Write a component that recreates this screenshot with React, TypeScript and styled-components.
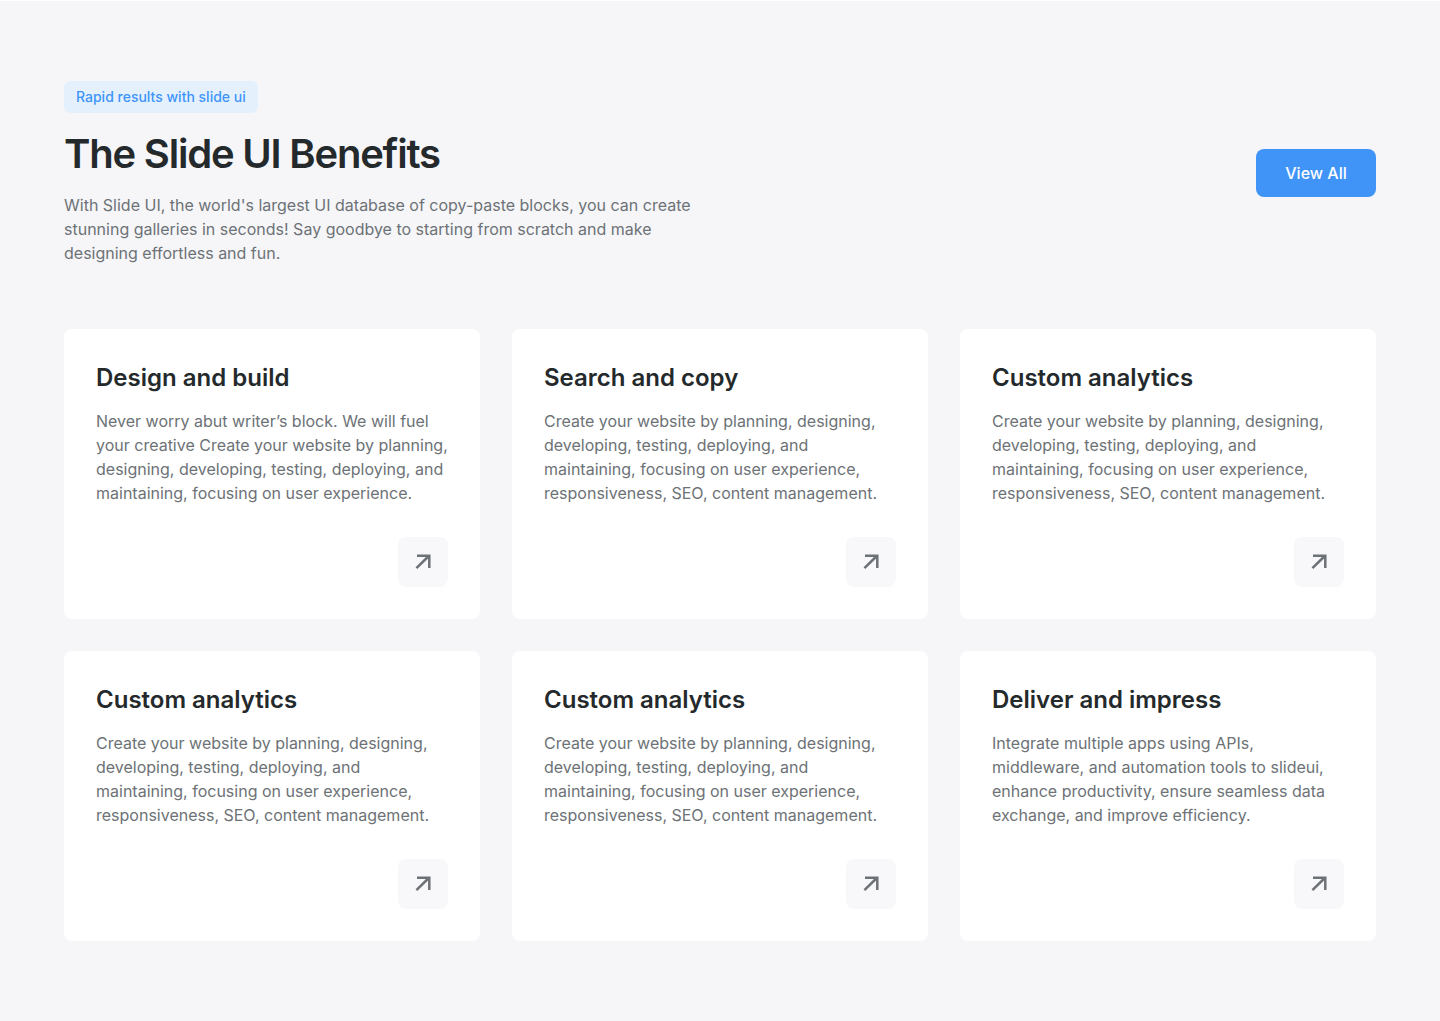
import React from "react";
import styled, { createGlobalStyle } from "styled-components";

const Global = createGlobalStyle`
  *, *::before, *::after { box-sizing: border-box; }
  body { margin: 0; background: #f6f6f9; font-family: Inter, "Liberation Sans", sans-serif; }
`;

const Section = styled.main`
  padding: 80px 64px;
  border-top: 1px solid #fdfdfe;
  color: #6d7276;
  font-size: 16px;
  line-height: 24px;
`;

const Header = styled.header`
  display: flex;
  align-items: center;
  justify-content: space-between;
  gap: 32px;
  margin-bottom: 64px;
`;

const Intro = styled.div`
  display: flex;
  flex-direction: column;
  align-items: flex-start;
  max-width: 640px;
`;

const Tag = styled.span`
  padding: 6px 12px;
  border-radius: 6px;
  background: #e4f1fd;
  color: #3f95f9;
  font-size: 14px;
  line-height: 20px;
  font-weight: 500;
`;

const Title = styled.h1`
  margin: 16px 0 14px;
  color: #24292c;
  font-size: 40px;
  line-height: 50px;
  font-weight: 600;
  letter-spacing: -0.03em;
`;

const Text = styled.p`
  margin: 0;
`;

const ViewAll = styled.button`
  flex: none;
  min-width: 120px;
  padding: 12px 24px;
  border: 0;
  border-radius: 8px;
  background: #4094f7;
  color: #fff;
  font: 500 16px/24px Inter, "Liberation Sans", sans-serif;
  cursor: pointer;
`;

const Grid = styled.div`
  display: grid;
  grid-template-columns: repeat(3, minmax(0, 1fr));
  gap: 32px;
`;

const Card = styled.article`
  display: flex;
  flex-direction: column;
  padding: 32px;
  border-radius: 8px;
  background: #fff;
`;

const CardTitle = styled.h2`
  margin: 0 0 14px;
  color: #24292c;
  font-size: 24px;
  line-height: 34px;
  font-weight: 600;
`;

const ArrowLink = styled.a`
  display: flex;
  align-items: center;
  justify-content: center;
  align-self: flex-end;
  width: 50px;
  height: 50px;
  margin-top: 32px;
  border-radius: 8px;
  background: #f8f8fa;
  color: #6d7276;
`;

const benefits = [
  { title: "Design and build", text: "Never worry abut writer’s block. We will fuel your creative Create your website by planning, designing, developing, testing, deploying, and maintaining, focusing on user experience." },
  { title: "Search and copy", text: "Create your website by planning, designing, developing, testing, deploying, and maintaining, focusing on user experience, responsiveness, SEO, content management." },
  { title: "Custom analytics", text: "Create your website by planning, designing, developing, testing, deploying, and maintaining, focusing on user experience, responsiveness, SEO, content management." },
  { title: "Custom analytics", text: "Create your website by planning, designing, developing, testing, deploying, and maintaining, focusing on user experience, responsiveness, SEO, content management." },
  { title: "Custom analytics", text: "Create your website by planning, designing, developing, testing, deploying, and maintaining, focusing on user experience, responsiveness, SEO, content management." },
  { title: "Deliver and impress", text: "Integrate multiple apps using APIs, middleware, and automation tools to slideui, enhance productivity, ensure seamless data exchange, and improve efficiency." },
];

const Arrow = () => (
  <svg width="24" height="24" viewBox="0 0 24 24" fill="none" stroke="currentColor" strokeWidth="2.5" aria-hidden="true">
    <path d="M5.4 18.2 17.8 6M6 5.7h12.3V18" />
  </svg>
);

export default function App() {
  return (
    <>
      <Global />
      <Section>
        <Header>
          <Intro>
            <Tag>Rapid results with slide ui</Tag>
            <Title>The Slide UI Benefits</Title>
            <Text>
              With Slide UI, the world's largest UI database of copy-paste blocks, you can create
              stunning galleries in seconds! Say goodbye to starting from scratch and make designing
              effortless and fun.
            </Text>
          </Intro>
          <ViewAll type="button">View All</ViewAll>
        </Header>
        <Grid>
          {benefits.map((item, i) => (
            <Card key={i}>
              <CardTitle>{item.title}</CardTitle>
              <Text>{item.text}</Text>
              <ArrowLink href="#" aria-label={item.title}>
                <Arrow />
              </ArrowLink>
            </Card>
          ))}
        </Grid>
      </Section>
    </>
  );
}
